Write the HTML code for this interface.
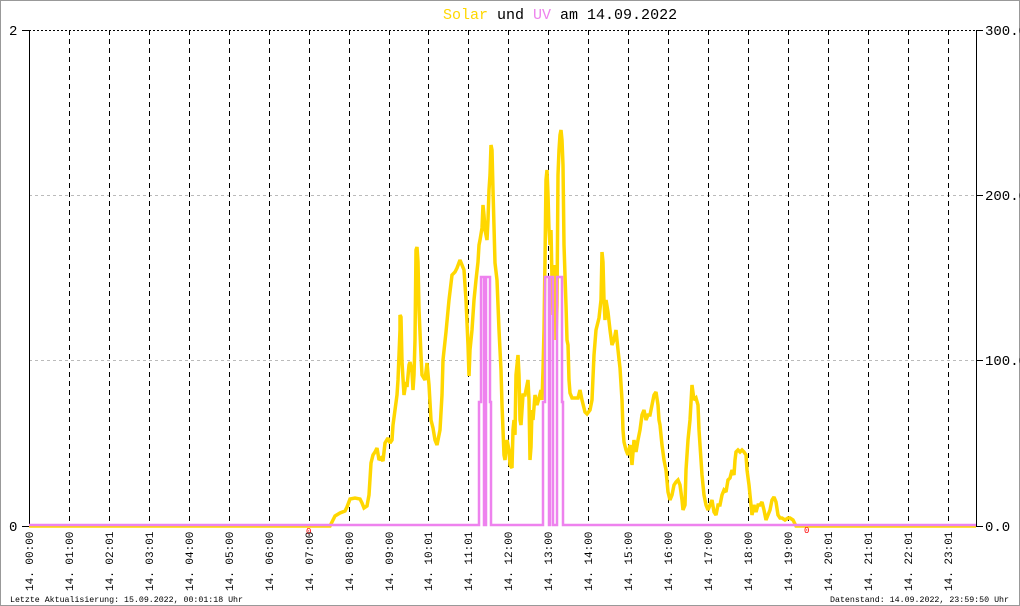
<!DOCTYPE html>
<html><head><meta charset="utf-8"><style>
html,body{margin:0;padding:0;background:#fff}
svg{display:block}
text{font-family:"Liberation Mono",monospace}
</style></head><body>
<svg width="1020" height="606" xmlns="http://www.w3.org/2000/svg">
<rect x="0.5" y="0.5" width="1019" height="605" fill="#fff" stroke="#999"/>
<text x="443" y="19" font-size="15" fill="#000"><tspan fill="#ffd700">Solar</tspan> und <tspan fill="#ee82ee">UV</tspan> am 14.09.2022</text>
<g stroke="#bbb" stroke-dasharray="3,3" stroke-width="1">
<line x1="29" y1="195.5" x2="976" y2="195.5"/>
<line x1="29" y1="360.5" x2="976" y2="360.5"/>
</g>
<line x1="29" y1="30.5" x2="976" y2="30.5" stroke="#000" stroke-dasharray="2,2"/>
<g stroke="#000" stroke-dasharray="5,4" stroke-width="1">
<line x1="69.5" y1="30" x2="69.5" y2="526"/><line x1="109.5" y1="30" x2="109.5" y2="526"/>
<line x1="149.5" y1="30" x2="149.5" y2="526"/><line x1="189.5" y1="30" x2="189.5" y2="526"/>
<line x1="229.5" y1="30" x2="229.5" y2="526"/><line x1="269.5" y1="30" x2="269.5" y2="526"/>
<line x1="309.5" y1="30" x2="309.5" y2="526"/><line x1="349.5" y1="30" x2="349.5" y2="526"/>
<line x1="389.5" y1="30" x2="389.5" y2="526"/><line x1="428.5" y1="30" x2="428.5" y2="526"/>
<line x1="468.5" y1="30" x2="468.5" y2="526"/><line x1="508.5" y1="30" x2="508.5" y2="526"/>
<line x1="548.5" y1="30" x2="548.5" y2="526"/><line x1="588.5" y1="30" x2="588.5" y2="526"/>
<line x1="628.5" y1="30" x2="628.5" y2="526"/><line x1="668.5" y1="30" x2="668.5" y2="526"/>
<line x1="708.5" y1="30" x2="708.5" y2="526"/><line x1="748.5" y1="30" x2="748.5" y2="526"/>
<line x1="788.5" y1="30" x2="788.5" y2="526"/><line x1="828.5" y1="30" x2="828.5" y2="526"/>
<line x1="868.5" y1="30" x2="868.5" y2="526"/><line x1="908.5" y1="30" x2="908.5" y2="526"/>
<line x1="948.5" y1="30" x2="948.5" y2="526"/>
</g>
<line x1="29.5" y1="30" x2="29.5" y2="526" stroke="#000"/>
<line x1="976.5" y1="30" x2="976.5" y2="526" stroke="#000"/>
<g stroke="#000">
<line x1="22" y1="30.5" x2="29" y2="30.5"/><line x1="22" y1="526.5" x2="29" y2="526.5"/>
<line x1="976" y1="30.5" x2="983" y2="30.5"/><line x1="976" y1="195.5" x2="983" y2="195.5"/>
<line x1="976" y1="360.5" x2="983" y2="360.5"/><line x1="976" y1="526.5" x2="983" y2="526.5"/>
</g>
<g font-size="14" fill="#000">
<text x="9" y="35">2</text><text x="9" y="531">0</text>
<text x="985" y="35">300.0</text><text x="985" y="200">200.0</text>
<text x="985" y="365">100.0</text><text x="985" y="531">0.0</text>
</g>
<polyline fill="none" stroke="#ffd700" stroke-width="3.5" stroke-linejoin="miter" stroke-miterlimit="2" points="29,526 330,526 335,516 340,513 345,511 347,507 350,499 355,498 360,499 362,503 364,508 367,506 369,495 371,463 373,455 375,452 377,448 379,460 381,458 383,461 385,443 388,438 390,443 392,440 393,425 395,410 397,395 398,380 399,355 400,330 400,315 401,317 402,362 404,395 406,382 407,387 409,365 410,362 412,372 413,390 414,375 415,340 416,250 417,247 418,262 419,310 421,355 422,375 425,380 427,363 429,385 431,420 433,428 435,440 437,445 440,430 442,395 443,360 446,332 449,300 452,275 455,272 457,268 460,260 462,265 464,270 466,300 468,345 469,376 470,350 472,330 474,300 476,280 478,262 479,245 480,240 482,228 483,205 484,215 485,230 486,235 487,240 488,220 489,190 490,175 491,145 492,150 493,190 495,263 497,280 499,330 501,370 502,405 503,430 504,455 505,460 507,440 509,450 510,465 512,468 513,430 514,420 515,435 516,375 518,355 519,375 520,420 521,425 523,395 525,395 526,390 528,380 529,400 530,460 531,447 532,410 533,420 535,395 537,405 539,398 541,390 542,400 543,370 544,330 545,260 546,180 547,170 548,195 549,230 550,245 551,230 552,280 553,315 554,280 555,265 556,340 557,305 558,175 559,150 560,135 561,130 562,140 563,165 564,245 566,305 567,340 568,345 569,380 570,393 572,398 575,398 578,398 580,390 582,400 585,412 587,414 590,410 592,400 594,355 596,330 599,318 601,300 602,252 603,262 604,300 605,320 606,300 608,312 610,330 612,345 614,340 616,330 618,350 620,368 622,400 623,430 624,442 626,450 628,455 630,445 632,465 634,440 636,452 638,440 640,430 642,415 644,410 646,420 648,415 650,415 652,405 654,395 656,392 658,405 659,420 660,425 662,445 664,460 666,470 668,492 670,500 672,495 674,485 676,482 678,480 680,485 682,500 683,510 685,505 686,470 688,440 690,420 692,385 694,400 696,398 698,405 699,430 700,445 702,475 704,495 706,505 708,510 710,505 712,500 714,512 716,515 718,505 720,505 722,495 724,490 726,492 728,480 730,478 732,470 734,475 735,460 736,452 738,450 740,452 742,450 744,452 746,455 747,470 749,485 750,495 752,515 754,505 756,512 758,505 760,505 762,502 764,510 766,520 768,515 770,510 772,500 774,497 776,502 778,515 780,518 782,518 785,520 788,518 790,518 793,520 795,524 796,526 976,526"/>
<polyline fill="none" stroke="#ee82ee" stroke-width="2.5" points="29,525 479,525 479,402 481,402 481,277 484,277 484,525 486,525 486,277 490,277 490,402 491,402 491,525 543,525 543,402 545,402 545,277 549,277 549,525 550,525 550,277 553,277 553,525 557,525 557,277 562,277 562,402 563,402 563,525 976,525"/>
<g font-size="9" fill="#f00"><text x="306" y="534">0</text><text x="804" y="533">0</text></g>
<g font-size="11" fill="#000">
<text transform="translate(33,591) rotate(-90)">14. 00:00</text>
<text transform="translate(73,591) rotate(-90)">14. 01:00</text>
<text transform="translate(113,591) rotate(-90)">14. 02:01</text>
<text transform="translate(153,591) rotate(-90)">14. 03:01</text>
<text transform="translate(193,591) rotate(-90)">14. 04:00</text>
<text transform="translate(233,591) rotate(-90)">14. 05:00</text>
<text transform="translate(273,591) rotate(-90)">14. 06:00</text>
<text transform="translate(313,591) rotate(-90)">14. 07:00</text>
<text transform="translate(353,591) rotate(-90)">14. 08:00</text>
<text transform="translate(393,591) rotate(-90)">14. 09:00</text>
<text transform="translate(432,591) rotate(-90)">14. 10:01</text>
<text transform="translate(472,591) rotate(-90)">14. 11:01</text>
<text transform="translate(512,591) rotate(-90)">14. 12:00</text>
<text transform="translate(552,591) rotate(-90)">14. 13:00</text>
<text transform="translate(592,591) rotate(-90)">14. 14:00</text>
<text transform="translate(632,591) rotate(-90)">14. 15:00</text>
<text transform="translate(672,591) rotate(-90)">14. 16:00</text>
<text transform="translate(712,591) rotate(-90)">14. 17:00</text>
<text transform="translate(752,591) rotate(-90)">14. 18:00</text>
<text transform="translate(792,591) rotate(-90)">14. 19:00</text>
<text transform="translate(832,591) rotate(-90)">14. 20:01</text>
<text transform="translate(872,591) rotate(-90)">14. 21:01</text>
<text transform="translate(912,591) rotate(-90)">14. 22:01</text>
<text transform="translate(952,591) rotate(-90)">14. 23:01</text>
</g>
<g font-size="8.3" fill="#000">
<text x="10" y="602" textLength="233">Letzte Aktualisierung: 15.09.2022, 00:01:18 Uhr</text>
<text x="830" y="602" textLength="179">Datenstand: 14.09.2022, 23:59:50 Uhr</text>
</g>
</svg>
</body></html>
